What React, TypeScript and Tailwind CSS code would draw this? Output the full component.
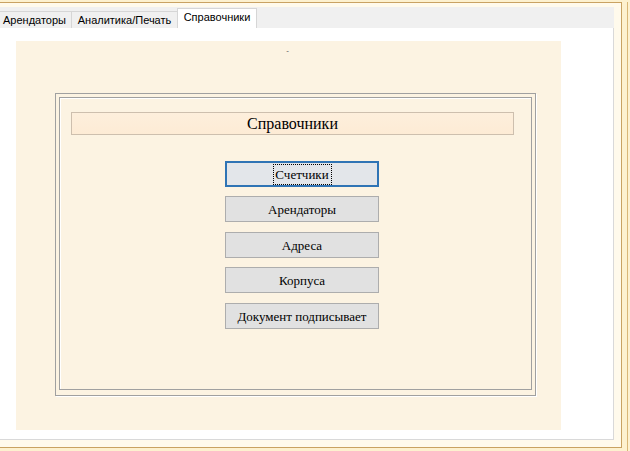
import React from "react";

const btns = [
  { label: "Счетчики", mt: 0, focused: true },
  { label: "Арендаторы", mt: 9 },
  { label: "Адреса", mt: 10 },
  { label: "Корпуса", mt: 9 },
  { label: "Документ подписывает", mt: 10 },
];

export default function App() {
  return (
    <div className="w-[630px] h-[451px] overflow-hidden bg-[#fdf1cf] pt-[2px] font-['Liberation_Sans',sans-serif]">
      <div className="w-[628px] h-[449px] border-r border-[#d9b777]">
        <div className="w-[622px] h-[446px] border-t border-r border-b border-[#c9a262] bg-[#fffaec] pt-[4px] pr-[7px] pb-[7px] flex flex-col">
          {/* tab strip */}
          <div className="h-[21px] bg-[#f0f0f0] flex items-end text-[11px] text-black leading-none">
            <div className="w-[72px] h-[17px] border-t border-r border-[#d6d6d6] bg-[#f0f0f0] flex items-center pl-[3px]">
              Арендаторы
            </div>
            <div className="w-[106px] h-[17px] border-t border-r border-[#d6d6d6] bg-[#f0f0f0] flex items-center justify-center">
              Аналитика/Печать
            </div>
            <div className="w-[80px] h-[20px] border-t border-r border-l border-[#d6d6d6] bg-white flex items-center justify-center pb-[2px] -ml-px">
              Справочники
            </div>
          </div>
          {/* panel */}
          <div className="flex-1 bg-white border-r border-b border-[#d9d9d9] pl-[16px] pt-[13px] pb-[8px]">
            <div className="w-[545px] h-[389px] bg-[#fcf3e2] flex flex-col items-start">
              <div className="w-full h-[12px] flex justify-center text-[8px] leading-none text-[#555] pt-[6px]">
                <span className="ml-[-2px]">-</span>
              </div>
              {/* group box */}
              <div className="ml-[39px] mt-[40px] w-[481px] h-[303px] border border-[#a0a0a0] shadow-[1px_1px_0_#ffffff] pt-[3px] pl-[3px]">
                <div className="w-[473px] h-[293px] border border-[#a0a0a0] shadow-[inset_1px_1px_0_#ffffff] flex flex-col items-start">
                  <div className="ml-[11px] mt-[14px] w-[443px] h-[23px] border border-[#cdbfae] bg-gradient-to-b from-[#fdefdc] to-[#fdebd5] flex items-center justify-center font-['Liberation_Serif',serif] text-[16px] text-black leading-none">
                    Справочники
                  </div>
                  <div className="ml-[165px] mt-[26px] flex flex-col">
                    {btns.map((b) =>
                      b.focused ? (
                        <div
                          key={b.label}
                          className="w-[154px] h-[26px] border-2 border-[#2f74b5] bg-[#e3e6ea] flex items-center justify-center font-['Liberation_Serif',serif] text-[13px] text-black leading-none"
                        >
                          <span className="border border-dotted border-black px-[1px] py-[3px] w-[59px] text-center whitespace-nowrap">
                            {b.label}
                          </span>
                        </div>
                      ) : (
                        <div
                          key={b.label}
                          style={{ marginTop: b.mt }}
                          className="w-[154px] h-[26px] border border-[#adadad] bg-[#e1e1e1] flex items-center justify-center font-['Liberation_Serif',serif] text-[13px] text-black leading-none whitespace-nowrap"
                        >
                          {b.label}
                        </div>
                      )
                    )}
                  </div>
                </div>
              </div>
            </div>
          </div>
        </div>
      </div>
    </div>
  );
}
